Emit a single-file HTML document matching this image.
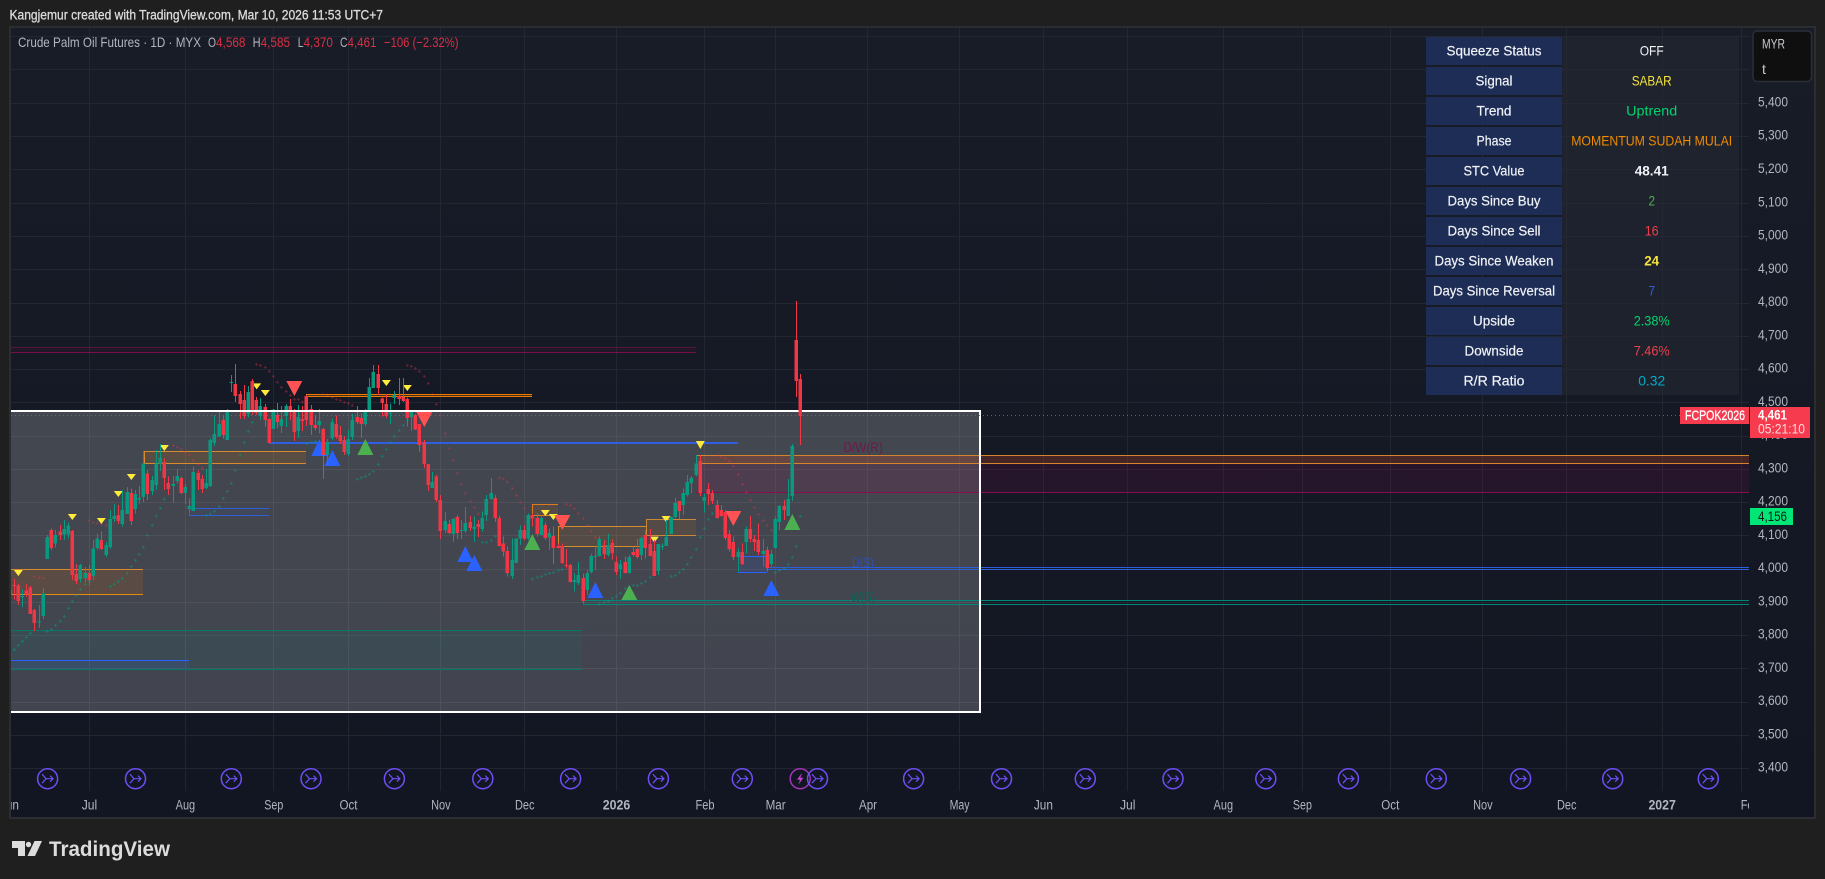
<!DOCTYPE html>
<html lang="en"><head><meta charset="utf-8"><title>Crude Palm Oil Futures</title>
<style>html,body{margin:0;padding:0;background:#1f1f1f;overflow:hidden}svg{display:block}text{font-family:"Liberation Sans",sans-serif}</style></head>
<body>
<svg xmlns="http://www.w3.org/2000/svg" width="1825" height="879" viewBox="0 0 1825 879">
<defs>
<linearGradient id="bg" x1="0" y1="0" x2="0" y2="1"><stop offset="0" stop-color="#181c27"/><stop offset="1" stop-color="#121622"/></linearGradient>
<clipPath id="cl"><rect x="11" y="28" width="1738" height="763"/></clipPath>
<clipPath id="tc"><rect x="11" y="792" width="1738" height="25"/></clipPath>
<marker id="pg" viewBox="0 0 12 12" refX="6" refY="6" markerWidth="12" markerHeight="12" markerUnits="userSpaceOnUse"><path d="M1.5 6h9M6 1.5v9" stroke="#089981" stroke-opacity=".55" stroke-width="3" fill="none"/></marker>
<marker id="pr" viewBox="0 0 12 12" refX="6" refY="6" markerWidth="12" markerHeight="12" markerUnits="userSpaceOnUse"><path d="M1.5 6h9M6 1.5v9" stroke="#f23645" stroke-opacity=".36" stroke-width="3" fill="none"/></marker>
<g id="ic" fill="none" stroke="#6f4ef6"><circle r="10" stroke-width="1.5"/><path d="M-5.5-4.5L-1.5 0-5.5 4.5M-1.5 0H5.5M2.5-3L5.5 0 2.5 3" stroke-width="1.2"/></g>
</defs>
<rect width="1825" height="879" fill="#1f1f1f"/>
<text x="9.5" y="19.5" font-size="14" stroke="#dcdcdc" stroke-width=".3" fill="#dcdcdc" textLength="373.5" lengthAdjust="spacingAndGlyphs">Kangjemur created with TradingView.com, Mar 10, 2026 11:53 UTC+7</text>
<rect x="10" y="27" width="1805" height="791" fill="url(#bg)" stroke="#2c2d30" stroke-width="2"/>

<g clip-path="url(#cl)">
<!-- grid -->
<path stroke="#2a2e39" stroke-opacity=".65" stroke-width="1" shape-rendering="crispEdges" d="M11 36.5H1749M11 69.5H1749M11 103.5H1749M11 136.5H1749M11 169.5H1749M11 203.5H1749M11 236.5H1749M11 269.5H1749M11 303.5H1749M11 336.5H1749M11 369.5H1749M11 402.5H1749M11 436.5H1749M11 469.5H1749M11 502.5H1749M11 535.5H1749M11 569.5H1749M11 602.5H1749M11 635.5H1749M11 668.5H1749M11 702.5H1749M11 735.5H1749M11 768.5H1749M89.5 28V791M185.5 28V791M273.5 28V791M348.5 28V791M440.5 28V791M524.5 28V791M616.5 28V791M704.5 28V791M775.5 28V791M867.5 28V791M959.5 28V791M1043.5 28V791M1127.5 28V791M1223.5 28V791M1302.5 28V791M1390.5 28V791M1482.5 28V791M1566.5 28V791M1662.5 28V791M1741.5 28V791"/>
<!-- white range box fill -->
<rect x="0" y="411" width="980" height="301" fill="#fff" fill-opacity=".2"/>

<!-- zones -->
<g shape-rendering="crispEdges">
<rect x="11" y="347" width="685" height="6" fill="#880e4f" fill-opacity=".1"/>
<path d="M11 347.5H696" stroke="#880e4f" stroke-opacity=".55" fill="none"/>
<path d="M11 352.5H696" stroke="#880e4f" stroke-opacity=".85" fill="none"/>
<rect x="306" y="394" width="226" height="3" fill="#f57c00" fill-opacity=".2"/>
<path d="M306.5 394.5H532M306.5 396.5H532M306.5 394V412" stroke="#ef7c00" fill="none"/>
<rect x="11" y="569" width="132" height="26" fill="#f57c00" fill-opacity=".13"/>
<path d="M11 569.5H143" stroke="#d98a2a" fill="none"/>
<path d="M11 594.5H143" stroke="#e88a10" fill="none"/>
<rect x="144" y="451" width="162" height="12" fill="#f57c00" fill-opacity=".13"/>
<path d="M144 451.5H306M144 463.5H306M144.5 451V497" stroke="#d98a2a" fill="none"/>
<rect x="189" y="508" width="80" height="8" fill="#2962ff" fill-opacity=".05"/>
<path d="M189 508.5H269M189 515.5H269" stroke="#2f5fd8" fill="none"/>
<path d="M189.5 498V516" stroke="#0a8f78" fill="none"/>
<rect x="11" y="630" width="571" height="39" fill="#009688" fill-opacity=".08"/>
<path d="M11 630.5H582M11 669.5H582" stroke="#00796b" fill="none"/>
<rect x="11" y="660" width="178" height="9" fill="#2962ff" fill-opacity=".12"/>
<path d="M11 660.5H189" stroke="#2962ff" fill="none"/>
<path d="M269 443H738" stroke="#2f5fe0" stroke-width="2" fill="none"/>
<!-- orange boxes lower -->
<rect x="558" y="526" width="88" height="20" fill="#f57c00" fill-opacity=".1"/>
<path d="M558 526.5H646M558 546.5H646M558.5 526V546" stroke="#d98a2a" fill="none"/>
<rect x="646" y="519" width="50" height="16" fill="#f57c00" fill-opacity=".1"/>
<path d="M646 519.5H696M646 535.5H696M646.5 519V535" stroke="#c98838" fill="none"/>
<rect x="532" y="504" width="26" height="12" fill="#f57c00" fill-opacity=".1"/>
<path d="M532 504.5H558M532 515.5H558M532.5 504V516" stroke="#e07a20" fill="none"/>
<!-- D/W(R) -->
<rect x="697" y="455" width="1052" height="37" fill="#880e4f" fill-opacity=".16"/>
<rect x="697" y="455" width="1052" height="8" fill="#f57c00" fill-opacity=".14"/>
<path d="M697 455.5H1749M701 463.5H1749" stroke="#d4842c" fill="none"/>
<path d="M696 492.5H1749" stroke="#880e4f" fill="none"/>
<!-- D(S) W(S) -->
<rect x="738" y="556" width="29" height="16" fill="#2962ff" fill-opacity=".12"/>
<path d="M738 556.5H767M738 572.5H767" stroke="#2962ff" fill="none"/>
<path d="M738.5 550V572" stroke="#0a8f78" fill="none"/>
<path d="M767 567.5H1749M767 569.5H1749" stroke="#2f5fd8" fill="none"/>
<path d="M583 600.5H1749M583 604.5H1749" stroke="#00897b" fill="none"/>
</g>

<text x="843.3" y="452" font-size="14" fill="#6e1a4c" textLength="39.5" lengthAdjust="spacingAndGlyphs">D/W(R)</text>
<text x="852" y="567" font-size="14" fill="#2c50b4" textLength="22" lengthAdjust="spacingAndGlyphs">D(S)</text>
<text x="850.7" y="601.5" font-size="14" fill="#0a6458" textLength="24.5" lengthAdjust="spacingAndGlyphs">W(S)</text>

<!-- plus markers & triangles, z3 space -->
<g transform="translate(0 340) scale(.33333)">
<polyline fill="none" stroke="none" marker-start="url(#pg)" marker-mid="url(#pg)" marker-end="url(#pg)" points="31,943 43,929 55,916 67,904 79,892 91,880 142,874 154,868 166,856 181,844 193,829 205,805 217,784 229,766 241,748 256,733 268,724 331,739 343,733 355,724 367,715 382,700 394,679 406,661 418,643 430,622 442,586 457,556 469,528 481,505 493,478 619,526 631,522 643,514 658,499 670,475 682,454 694,430 706,391 721,346 733,307 745,274 757,247 920,310 935,307 946,304 1072,418 1084,413 1096,409 1108,403 1120,394 1135,373 1147,349 1159,328 1171,307 1183,289 1198,271 1210,256 1222,241"/>
<polyline fill="none" stroke="none" marker-start="url(#pr)" marker-mid="url(#pr)" marker-end="url(#pr)" points="103,710 118,713 130,715 268,541 280,547 292,550 304,553 319,556 520,316 532,322 544,328 556,337 568,346 580,361 595,373 607,385 769,73 781,76 796,82 808,94 820,109 832,127 844,142 859,154 871,166 883,178 895,178 907,186 970,163 982,165 997,172 1009,178 1021,181 1033,187 1045,190 1057,196 1222,76 1234,79 1246,85 1258,94 1273,109 1285,130 1297,163 1309,193 1321,226 1336,281 1348,325 1360,361 1372,400 1384,433 1396,460 1411,484 1423,502 1435,522"/>
<g fill="#ffeb3b">
<polygon points="41.5,690 68.5,690 55,708"/><polygon points="203.5,522 230.5,522 217,540"/><polygon points="290.5,534 317.5,534 304,552"/><polygon points="341.5,453 368.5,453 355,471"/><polygon points="380.5,402 407.5,402 394,420"/><polygon points="479.5,315 506.5,315 493,333"/><polygon points="756.5,130 783.5,130 770,148"/><polygon points="782.5,150 809.5,150 796,168"/><polygon points="1145.5,120 1172.5,120 1159,138"/><polygon points="1208.5,135 1235.5,135 1222,153"/>
</g>
<g fill="#ff5252"><polygon points="859,123 907,123 883,168"/><polygon points="1249,216 1297,216 1273,261"/></g>
<g fill="#2962ff"><polygon points="958,297 934,348 982,348"/><polygon points="997,330 973,378 1021,378"/><polygon points="1396,618 1372,666 1420,666"/><polygon points="1423,645 1399,693 1447,693"/></g>
<polygon fill="#4caf50" points="1096,297 1072,345 1120,345"/>
</g>

<!-- z4 markers & triangles -->
<g transform="translate(480 340) scale(.33333)">
<polyline fill="none" stroke="none" marker-start="url(#pg)" marker-mid="url(#pg)" marker-end="url(#pg)" points="7,607 19,607 34,601 46,589 157,717 172,712 184,709 196,703 208,700 220,697 235,691 247,688 358,793 373,787 385,784 397,775 409,769 421,760 436,745 448,741 460,736 472,736 484,730 496,724 511,712 574,709 586,706 598,697 610,688 622,673 634,652 649,628 661,592 673,565 685,538 697,520 886,697 898,691 913,685 925,673 937,652 949,619 961,529"/>
<polyline fill="none" stroke="none" marker-start="url(#pr)" marker-mid="url(#pr)" marker-end="url(#pr)" points="58,414 70,417 82,426 97,445 109,466 121,487 133,505 259,493 271,496 283,505 295,520 310,535 322,556 334,574 346,592 712,346 724,351 736,355 748,364 760,379 775,403 787,433 799,458 811,481 823,502 835,523 850,541 862,556 874,571"/>
<g fill="#ffeb3b"><polygon points="182.5,510 209.5,510 196,528"/><polygon points="206.5,522 233.5,522 220,540"/><polygon points="509.5,590 536.5,590 523,608"/><polygon points="544.5,528 571.5,528 558,546"/><polygon points="647.5,303 674.5,303 661,327"/></g>
<g fill="#ff5252"><polygon points="223,525 271,525 247,570"/><polygon points="736,513 784,513 760,558"/></g>
<g fill="#2962ff"><polygon points="346,726 322,774 370,774"/><polygon points="874,720 850,768 898,768"/></g>
<g fill="#4caf50"><polygon points="157,582 133,630 181,630"/><polygon points="448,735 424,780 472,780"/><polygon points="937,522 913,570 961,570"/></g>
</g>

<!-- candles z3 -->
<g transform="translate(0 340) scale(.33333)" fill="none" shape-rendering="crispEdges">
<path stroke="#f23645" stroke-width="3" d="M43 717V778M55 730V795M79 732V771M91 738V822M103 807V873M154 565V630M181 555V600M217 570V720M229 672V732M268 675V737M304 575V630M355 495V552M394 445V555M442 390V480M493 355V450M505 410V465M544 410V462M595 392V450M607 405V459M670 225V295M706 72V186M721 153V237M733 135V237M757 117V225M769 171V225M796 192V260M808 235V309M832 189V264M871 177V240M883 207V303M907 198V273M919 165V258M934 195V285M946 225V270M970 264V417M1009 226V297M1021 258V312M1033 290V345M1072 198V252M1084 220V294M1135 75V165M1147 172V230M1159 162V234M1198 114V195M1210 114V186M1222 172V260M1246 222V270M1258 252V336M1273 300V384M1285 372V453M1309 405V486M1321 465V597M1348 540V582M1372 525V597M1411 528V573M1435 540V591"/>
<path stroke="#f23645" stroke-width="10" d="M43 735V738M55 737V783M79 752V763M91 743V822M103 810V849M154 570V624M181 575V585M217 573V705M229 702V723M268 699V720M304 600V627M355 525V543M394 459V543M442 400V462M493 366V414M505 429V447M544 414V459M595 399V420M607 417V447M670 240V285M706 132V168M721 162V192M733 180V228M757 123V210M769 180V219M796 201V240M808 237V309M832 225V246M871 198V216M883 210V276M907 237V243M919 168V240M934 207V255M946 255V264M970 267V345M1009 252V291M1021 285V303M1033 300V336M1072 231V246M1084 234V252M1135 102V144M1147 175V189M1159 192V228M1198 168V177M1210 171V183M1222 177V234M1246 225V268M1258 252V315M1273 306V372M1285 372V435M1309 410V480M1321 480V573M1348 552V579M1372 531V579M1411 546V564M1435 552V561"/>
<path stroke="#089981" stroke-width="3" d="M31 740V770M67 748V801M118 795V864M130 744V837M142 585V657M166 570V622M193 540V600M205 548V595M241 672V727M256 681V727M280 600V722M292 580V630M319 606V651M331 510V627M343 492V546M367 450V560M382 441V522M406 450V520M418 438V490M430 333V486M457 408V465M469 330V450M481 312V393M520 408V488M532 387V430M556 430V492M568 480V515M580 380V513M619 387V447M631 295V441M643 226V318M658 213V290M682 207V300M694 105V156M745 138V233M781 174V240M820 207V267M844 198V279M859 192V261M895 195V294M958 207V280M982 297V375M997 237V300M1045 270V348M1057 222V300M1096 207V258M1108 114V216M1120 75V144M1171 190V252M1183 153V192M1234 210V273M1297 396V444M1336 516V579M1360 534V606M1384 540V597M1396 501V579M1423 530V606"/>
<path stroke="#089981" stroke-width="10" d="M31 750V765M67 768V771M118 845V848M130 760V828M142 591V657M166 585V610M193 567V583M205 557V583M241 675V717M256 699V714M280 625V708M292 595V624M319 615V645M331 537V621M343 528V537M367 510V552M382 456V522M406 462V507M418 474V478M430 370V471M457 420V453M469 370V435M481 354V372M520 432V438M532 408V423M556 441V459M568 498V507M580 396V513M619 429V444M631 300V438M643 282V309M658 252V290M682 213V300M694 126V129M745 156V222M781 198V228M820 209V267M844 237V258M859 198V228M895 231V273M958 243V255M982 306V345M997 246V294M1045 297V342M1057 240V291M1096 216V252M1108 141V213M1120 96V144M1171 219V222M1183 165V174M1234 216V231M1297 426V444M1336 543V570M1360 537V582M1384 570V573M1396 549V573M1423 561V567"/>
</g>
<!-- candles z4 -->
<g transform="translate(480 340) scale(.33333)" fill="none" shape-rendering="crispEdges">
<path stroke="#f23645" stroke-width="3" d="M46 465V546M58 526V620M70 590V650M82 620V710M133 555V600M157 520V560M172 520V590M196 548V600M220 560V672M235 610V625M247 610V672M259 627V685M271 672V728M310 700V790M373 600V657M397 598V658M409 650V705M436 650V700M460 620V650M472 597V655M496 570V655M511 567V650M523 600V708M598 483V537M661 345V468M685 429V495M697 450V492M712 480V535M724 495V530M736 510V600M748 570V635M760 590V660M787 610V675M811 528V607M823 585V633M835 550V645M862 620V695M913 480V540"/>
<path stroke="#f23645" stroke-width="10" d="M46 474V534M58 534V618M70 610V634M82 633V699M133 570V595M157 525V535M172 534V582M196 555V594M220 588V624M235 618V624M247 618V669M259 675V678M271 675V726M310 714V783M373 615V642M397 609V639M409 666V696M436 666V699M460 636V645M472 627V651M496 585V624M511 612V648M523 633V708M598 483V513M661 363V459M685 447V462M697 459V483M712 495V534M724 510V528M736 516V594M748 582V627M760 606V651M787 636V672M811 567V597M823 597V606M835 600V636M862 630V684M913 498V510"/>
<path stroke="#089981" stroke-width="3" d="M7 515V575M19 465V543M34 414V480M97 595V717M109 595V668M121 556V615M145 520V600M184 525V585M208 565V630M283 700V755M295 666V735M322 690V765M334 640V700M346 620V690M358 590V650M385 582V650M421 660V717M448 645V700M484 590V660M535 612V705M547 610V630M559 540V618M574 530V580M586 472V535M610 445V525M622 405V470M634 408V460M649 345V410M673 460V518M775 625V665M799 560V640M850 597V680M874 630V680M886 530V625M898 495V570M925 417V527M937 312V483"/>
<path stroke="#089981" stroke-width="10" d="M7 534V567M19 477V525M34 459V477M97 660V708M109 595V669M121 570V595M145 525V595M184 534V585M208 579V592M283 720V726M295 705V729M322 699V750M334 648V696M346 648V651M358 597V648M385 615V645M421 672V687M448 651V699M484 594V645M535 612V693M547 618V621M559 591V618M574 531V582M586 489V531M610 459V495M622 426V465M634 414V429M649 370V405M673 471V483M775 636V651M799 567V606M850 633V642M874 642V672M886 537V624M898 498V546M925 477V528M937 318V468"/>
</g>

<!-- white border of box -->
<path d="M0 411H980V712H0" fill="none" stroke="#fff" stroke-width="2" shape-rendering="crispEdges"/>
<!-- last two candles above border -->
<g transform="translate(480 340) scale(.33333)" fill="none" shape-rendering="crispEdges">
<path stroke="#f23645" stroke-width="3" d="M949-117V171M961 102V315"/>
<path stroke="#f23645" stroke-width="10" d="M949 0V123M961 117V228"/>
</g>
<path d="M11 415.5H1680" stroke="#f23645" stroke-opacity=".85" stroke-dasharray="1 3" fill="none" shape-rendering="crispEdges"/>

<!-- icons -->
<use href="#ic" x="47.6" y="778.7"/><use href="#ic" x="135.5" y="778.7"/><use href="#ic" x="231.3" y="778.7"/><use href="#ic" x="311" y="778.7"/><use href="#ic" x="394.4" y="778.7"/><use href="#ic" x="482.8" y="778.7"/><use href="#ic" x="570.6" y="778.7"/><use href="#ic" x="658.4" y="778.7"/><use href="#ic" x="742.3" y="778.7"/>
<g transform="translate(800.2 778.7)"><circle r="10" fill="none" stroke="#a435b8" stroke-width="1.5"/><path d="M1.8-6L-3.2 1H-.2L-1.8 6 3.2-1H.2Z" fill="#c43ed0"/></g>
<use href="#ic" x="817.5" y="778.7"/><use href="#ic" x="913.6" y="778.7"/><use href="#ic" x="1001.5" y="778.7"/><use href="#ic" x="1085.3" y="778.7"/><use href="#ic" x="1173" y="778.7"/><use href="#ic" x="1265.8" y="778.7"/><use href="#ic" x="1348.4" y="778.7"/><use href="#ic" x="1436.3" y="778.7"/><use href="#ic" x="1520.6" y="778.7"/><use href="#ic" x="1612.7" y="778.7"/><use href="#ic" x="1708.3" y="778.7"/>
</g>

<!-- legend -->
<g font-size="14" fill="#b2b5be">
<text x="18" y="47" textLength="183" lengthAdjust="spacingAndGlyphs">Crude Palm Oil Futures · 1D · MYX</text>
<text x="208" y="47" textLength="8" lengthAdjust="spacingAndGlyphs">O</text><text x="252.6" y="47" textLength="8" lengthAdjust="spacingAndGlyphs">H</text><text x="297.7" y="47" textLength="5.8" lengthAdjust="spacingAndGlyphs">L</text><text x="340" y="47" textLength="7.5" lengthAdjust="spacingAndGlyphs">C</text>
<g fill="#d92f44">
<text x="216" y="47" textLength="29.5" lengthAdjust="spacingAndGlyphs">4,568</text>
<text x="260.6" y="47" textLength="29.5" lengthAdjust="spacingAndGlyphs">4,585</text>
<text x="303.5" y="47" textLength="29.5" lengthAdjust="spacingAndGlyphs">4,370</text>
<text x="347.5" y="47" textLength="29" lengthAdjust="spacingAndGlyphs">4,461</text>
<text x="384" y="47" textLength="74.5" lengthAdjust="spacingAndGlyphs">−106 (−2.32%)</text>
</g></g>

<!-- table -->
<rect x="1562" y="37" width="177" height="358" fill="#262a35" fill-opacity=".55"/>
<g fill="#1e2e57" fill-opacity=".95">
<rect x="1426" y="37" width="136" height="28"/><rect x="1426" y="67" width="136" height="28"/><rect x="1426" y="97" width="136" height="28"/><rect x="1426" y="127" width="136" height="28"/><rect x="1426" y="157" width="136" height="28"/><rect x="1426" y="187" width="136" height="28"/><rect x="1426" y="217" width="136" height="28"/><rect x="1426" y="247" width="136" height="28"/><rect x="1426" y="277" width="136" height="28"/><rect x="1426" y="307" width="136" height="28"/><rect x="1426" y="337" width="136" height="28"/><rect x="1426" y="367" width="136" height="28"/>
</g>
<g font-size="14" text-anchor="middle" fill="#f0f2f6" stroke="#f0f2f6" stroke-width=".2">
<text x="1494" y="55.5" textLength="95" lengthAdjust="spacingAndGlyphs">Squeeze Status</text>
<text x="1494" y="85.5" textLength="37" lengthAdjust="spacingAndGlyphs">Signal</text>
<text x="1494" y="115.5" textLength="35" lengthAdjust="spacingAndGlyphs">Trend</text>
<text x="1494" y="145.5" textLength="35" lengthAdjust="spacingAndGlyphs">Phase</text>
<text x="1494" y="175.5" textLength="61" lengthAdjust="spacingAndGlyphs">STC Value</text>
<text x="1494" y="205.5" textLength="93" lengthAdjust="spacingAndGlyphs">Days Since Buy</text>
<text x="1494" y="235.5" textLength="93" lengthAdjust="spacingAndGlyphs">Days Since Sell</text>
<text x="1494" y="265.5" textLength="119" lengthAdjust="spacingAndGlyphs">Days Since Weaken</text>
<text x="1494" y="295.5" textLength="122" lengthAdjust="spacingAndGlyphs">Days Since Reversal</text>
<text x="1494" y="325.5" textLength="42" lengthAdjust="spacingAndGlyphs">Upside</text>
<text x="1494" y="355.5" textLength="59" lengthAdjust="spacingAndGlyphs">Downside</text>
<text x="1494" y="385.5" textLength="61" lengthAdjust="spacingAndGlyphs">R/R Ratio</text>
</g>
<g font-size="14" text-anchor="middle" fill="#f0f2f6">
<text x="1651.7" y="55.5" textLength="24" lengthAdjust="spacingAndGlyphs">OFF</text>
<text x="1651.7" y="85.5" textLength="40" lengthAdjust="spacingAndGlyphs" fill="#f5e33c">SABAR</text>
<text x="1651.7" y="115.5" textLength="51" lengthAdjust="spacingAndGlyphs" fill="#00d46c">Uptrend</text>
<text x="1651.7" y="145.5" textLength="161" lengthAdjust="spacingAndGlyphs" fill="#ef8c00">MOMENTUM SUDAH MULAI</text>
<text x="1651.7" y="175.5" textLength="34" lengthAdjust="spacingAndGlyphs" font-weight="700">48.41</text>
<text x="1651.7" y="205.5" fill="#4caf50" textLength="6.5" lengthAdjust="spacingAndGlyphs">2</text>
<text x="1651.7" y="235.5" textLength="14" lengthAdjust="spacingAndGlyphs" fill="#ee3f4c">16</text>
<text x="1651.7" y="265.5" textLength="15" lengthAdjust="spacingAndGlyphs" font-weight="700" fill="#f5e33c">24</text>
<text x="1651.7" y="295.5" fill="#2f5fe0" textLength="6.5" lengthAdjust="spacingAndGlyphs">7</text>
<text x="1651.7" y="325.5" textLength="36" lengthAdjust="spacingAndGlyphs" fill="#00d46c">2.38%</text>
<text x="1651.7" y="355.5" textLength="36" lengthAdjust="spacingAndGlyphs" fill="#ee3f4c">7.46%</text>
<text x="1651.7" y="385.5" textLength="27" lengthAdjust="spacingAndGlyphs" fill="#00acc9">0.32</text>
</g>

<!-- price axis -->
<g font-size="14" fill="#b2b5be">
<text x="1758" y="106.7" textLength="30" lengthAdjust="spacingAndGlyphs">5,400</text><text x="1758" y="139.7" textLength="30" lengthAdjust="spacingAndGlyphs">5,300</text><text x="1758" y="173" textLength="30" lengthAdjust="spacingAndGlyphs">5,200</text><text x="1758" y="206.5" textLength="30" lengthAdjust="spacingAndGlyphs">5,100</text><text x="1758" y="239.7" textLength="30" lengthAdjust="spacingAndGlyphs">5,000</text><text x="1758" y="273" textLength="30" lengthAdjust="spacingAndGlyphs">4,900</text><text x="1758" y="306.2" textLength="30" lengthAdjust="spacingAndGlyphs">4,800</text><text x="1758" y="339.5" textLength="30" lengthAdjust="spacingAndGlyphs">4,700</text><text x="1758" y="372.7" textLength="30" lengthAdjust="spacingAndGlyphs">4,600</text><text x="1758" y="406" textLength="30" lengthAdjust="spacingAndGlyphs">4,500</text><text x="1758" y="439" textLength="30" lengthAdjust="spacingAndGlyphs">4,400</text><text x="1758" y="472.5" textLength="30" lengthAdjust="spacingAndGlyphs">4,300</text><text x="1758" y="505.7" textLength="30" lengthAdjust="spacingAndGlyphs">4,200</text><text x="1758" y="539" textLength="30" lengthAdjust="spacingAndGlyphs">4,100</text><text x="1758" y="572.2" textLength="30" lengthAdjust="spacingAndGlyphs">4,000</text><text x="1758" y="605.5" textLength="30" lengthAdjust="spacingAndGlyphs">3,900</text><text x="1758" y="638.7" textLength="30" lengthAdjust="spacingAndGlyphs">3,800</text><text x="1758" y="672" textLength="30" lengthAdjust="spacingAndGlyphs">3,700</text><text x="1758" y="705.2" textLength="30" lengthAdjust="spacingAndGlyphs">3,600</text><text x="1758" y="738.5" textLength="30" lengthAdjust="spacingAndGlyphs">3,500</text><text x="1758" y="771.7" textLength="30" lengthAdjust="spacingAndGlyphs">3,400</text>
</g>
<rect x="1680" y="407" width="69" height="17" fill="#f63b4e"/>
<text x="1685" y="420" font-size="14" stroke="#fff" stroke-width=".3" fill="#fff" textLength="60" lengthAdjust="spacingAndGlyphs">FCPOK2026</text>
<rect x="1750" y="407" width="60" height="31" fill="#f63b4e"/>
<text x="1758" y="419.5" font-size="14" font-weight="700" fill="#fff" textLength="29" lengthAdjust="spacingAndGlyphs">4,461</text>
<text x="1758" y="433.5" font-size="14" fill="#ffd9dd" textLength="47" lengthAdjust="spacingAndGlyphs">05:21:10</text>
<rect x="1750" y="508" width="43" height="17" fill="#00e676"/>
<text x="1758" y="521" font-size="14" fill="#0d1a14" textLength="29" lengthAdjust="spacingAndGlyphs">4,156</text>

<!-- MYR -->
<rect x="1753" y="31" width="58.5" height="50.5" rx="4" fill="#0f0f0f" stroke="#2a2e39" stroke-width="1.5"/>
<text x="1762" y="48.5" font-size="14" fill="#c8cad0" textLength="23" lengthAdjust="spacingAndGlyphs">MYR</text>
<text x="1762" y="74" font-size="14" fill="#c8cad0">t</text>

<!-- time axis -->
<g clip-path="url(#tc)" font-size="13.5" fill="#b2b5be" text-anchor="middle">
<text x="9.5" y="809.5" textLength="19" lengthAdjust="spacingAndGlyphs">Jun</text>
<text x="89.5" y="809.5" textLength="15.5" lengthAdjust="spacingAndGlyphs">Jul</text>
<text x="185.4" y="809.5" textLength="19.5" lengthAdjust="spacingAndGlyphs">Aug</text>
<text x="273.8" y="809.5" textLength="19" lengthAdjust="spacingAndGlyphs">Sep</text>
<text x="348.5" y="809.5" textLength="18" lengthAdjust="spacingAndGlyphs">Oct</text>
<text x="440.9" y="809.5" textLength="19.5" lengthAdjust="spacingAndGlyphs">Nov</text>
<text x="524.7" y="809.5" textLength="19.5" lengthAdjust="spacingAndGlyphs">Dec</text>
<text x="616.5" y="809.5" textLength="27.5" lengthAdjust="spacingAndGlyphs" font-weight="700">2026</text>
<text x="705" y="809.5" textLength="19" lengthAdjust="spacingAndGlyphs">Feb</text>
<text x="775.6" y="809.5" textLength="20" lengthAdjust="spacingAndGlyphs">Mar</text>
<text x="868" y="809.5" textLength="18" lengthAdjust="spacingAndGlyphs">Apr</text>
<text x="959.6" y="809.5" textLength="20" lengthAdjust="spacingAndGlyphs">May</text>
<text x="1043.4" y="809.5" textLength="19" lengthAdjust="spacingAndGlyphs">Jun</text>
<text x="1127.7" y="809.5" textLength="15.5" lengthAdjust="spacingAndGlyphs">Jul</text>
<text x="1223.3" y="809.5" textLength="19.5" lengthAdjust="spacingAndGlyphs">Aug</text>
<text x="1302.4" y="809.5" textLength="19" lengthAdjust="spacingAndGlyphs">Sep</text>
<text x="1390.3" y="809.5" textLength="18" lengthAdjust="spacingAndGlyphs">Oct</text>
<text x="1482.9" y="809.5" textLength="19.5" lengthAdjust="spacingAndGlyphs">Nov</text>
<text x="1566.7" y="809.5" textLength="19.5" lengthAdjust="spacingAndGlyphs">Dec</text>
<text x="1662.2" y="809.5" textLength="27.5" lengthAdjust="spacingAndGlyphs" font-weight="700">2027</text>
<text x="1750.2" y="809.5" textLength="19" lengthAdjust="spacingAndGlyphs">Feb</text>
</g>

<!-- logo -->
<path fill="#dcdcdc" d="M12 841H25V856H18V848H12Z"/>
<circle cx="28.5" cy="844.5" r="2.7" fill="#dcdcdc"/>
<path fill="#dcdcdc" d="M34.5 841H42L35 856H27.5Z"/>
<text x="49" y="856" font-size="21" font-weight="700" fill="#dcdcdc" textLength="121" lengthAdjust="spacingAndGlyphs">TradingView</text>
</svg>
</body></html>
